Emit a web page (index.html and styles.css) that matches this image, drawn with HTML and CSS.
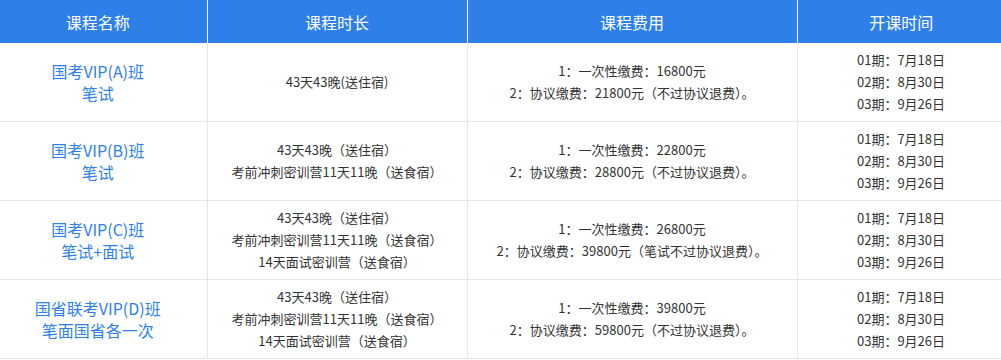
FILE: index.html
```html
<!DOCTYPE html>
<html lang="zh-CN">
<head>
    <meta charset="UTF-8">
    <meta name="viewport" content="width=device-width, initial-scale=1.0">
    <title>课程安排</title>
    <link rel="stylesheet" href="styles.css">
</head>
<body>
    <table class="course-table">
        <colgroup>
            <col class="col-name">
            <col class="col-length">
            <col class="col-fee">
            <col class="col-date">
        </colgroup>
        <thead>
            <tr>
                <th>课程名称</th>
                <th>课程时长</th>
                <th>课程费用</th>
                <th>开课时间</th>
            </tr>
        </thead>
        <tbody>
            <tr>
                <td class="name">国考VIP(A)班<br>笔试</td>
                <td>43天43晚(送住宿)</td>
                <td>1：一次性缴费：16800元<br>2：协议缴费：21800元（不过协议退费）。</td>
                <td>01期：7月18日<br>02期：8月30日<br>03期：9月26日</td>
            </tr>
            <tr>
                <td class="name">国考VIP(B)班<br>笔试</td>
                <td>43天43晚（送住宿）<br>考前冲刺密训营11天11晚（送食宿）</td>
                <td>1：一次性缴费：22800元<br>2：协议缴费：28800元（不过协议退费）。</td>
                <td>01期：7月18日<br>02期：8月30日<br>03期：9月26日</td>
            </tr>
            <tr>
                <td class="name">国考VIP(C)班<br>笔试+面试</td>
                <td>43天43晚（送住宿）<br>考前冲刺密训营11天11晚（送食宿）<br>14天面试密训营（送食宿）</td>
                <td>1：一次性缴费：26800元<br>2：协议缴费：39800元（笔试不过协议退费）。</td>
                <td>01期：7月18日<br>02期：8月30日<br>03期：9月26日</td>
            </tr>
            <tr>
                <td class="name">国省联考VIP(D)班<br>笔面国省各一次</td>
                <td>43天43晚（送住宿）<br>考前冲刺密训营11天11晚（送食宿）<br>14天面试密训营（送食宿）</td>
                <td>1：一次性缴费：39800元<br>2：协议缴费：59800元（不过协议退费）。</td>
                <td>01期：7月18日<br>02期：8月30日<br>03期：9月26日</td>
            </tr>
        </tbody>
    </table>
</body>
</html>
```

FILE: styles.css
```css
body {
    margin: 0;
    overflow: hidden;
    background-color: #fff;
    font-family: "Noto Sans CJK SC", "Noto Sans", sans-serif;
}

.course-table {
    width: 1016px;
    margin-left: -11px;
    border-collapse: collapse;
    table-layout: fixed;
}

.col-name {
    width: 218px;
}

.col-length {
    width: 260px;
}

.col-fee {
    width: 330px;
}

.col-date {
    width: 208px;
}

th {
    height: 43px;
    padding: 0;
    background-color: #2e7fe8;
    color: #fff;
    font-size: 16px;
    font-weight: normal;
    border-left: 1px solid #fff;
}

th:first-child {
    border-left: none;
}

td {
    height: 66px;
    padding: 6px 0;
    border: 1px solid #e6e6e6;
    border-top: none;
    text-align: center;
    vertical-align: middle;
    color: #333;
    font-size: 13px;
    line-height: 22px;
}

td:first-child {
    border-left: none;
}

td.name {
    color: #2e7fe8;
    font-size: 16px;
    line-height: 22px;
}
```
